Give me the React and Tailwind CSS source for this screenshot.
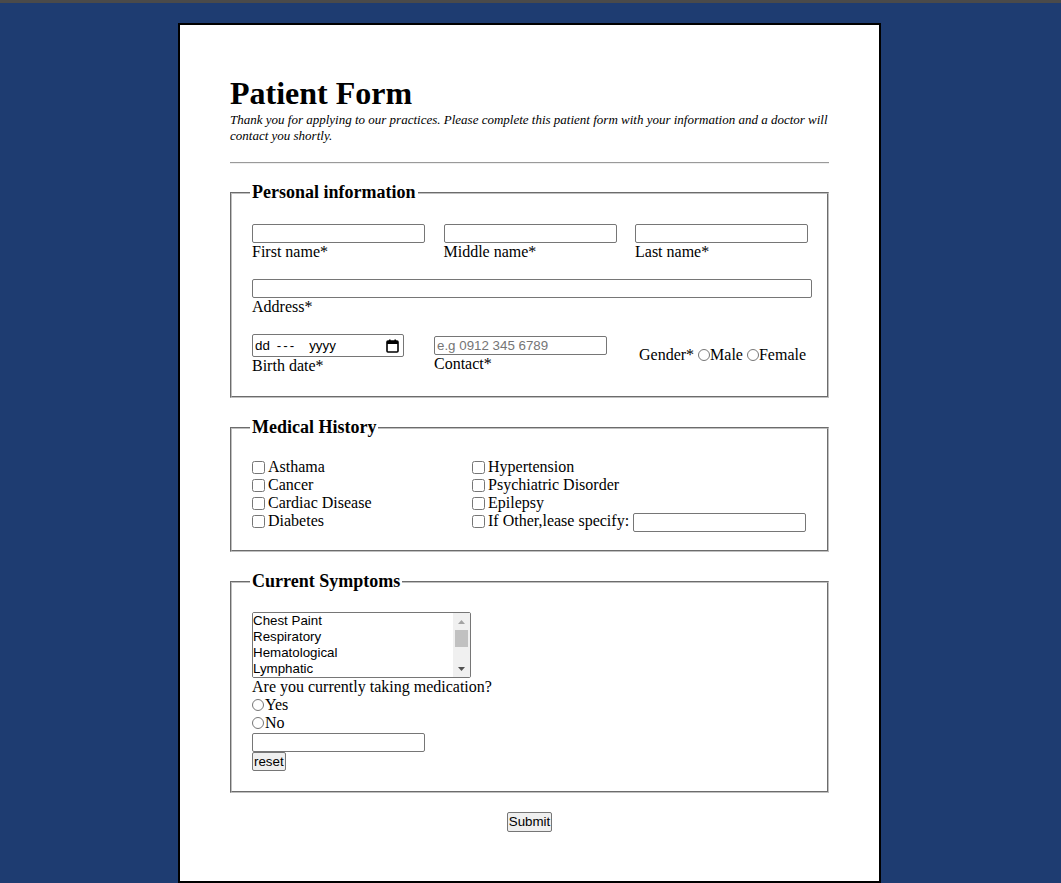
import React from "react";

const inputCls =
  "h-[19px] w-[173px] border border-[#767676] rounded-[2px] px-[2px] bg-white text-[13.33px] font-['Liberation_Sans',Arial,sans-serif] outline-none";

function Field({ label, className = "" }) {
  return (
    <div className={"flex flex-col " + className}>
      <input type="text" className={inputCls} />
      <label className="leading-[18px]">{label}</label>
    </div>
  );
}

function CalendarIcon() {
  return (
    <svg width="13" height="14" viewBox="0 0 13 14" fill="none">
      <rect x="1" y="2" width="11" height="11" rx="1" stroke="#000" strokeWidth="1.6" />
      <rect x="1" y="2" width="11" height="3" fill="#000" />
      <rect x="3" y="0.5" width="1.6" height="2.5" fill="#000" />
      <rect x="8.4" y="0.5" width="1.6" height="2.5" fill="#000" />
    </svg>
  );
}

function Check({ label }) {
  return (
    <label className="flex items-center leading-[18px]">
      <input type="checkbox" className="mr-[3px] w-[13px] h-[13px]" />
      {label}
    </label>
  );
}

function Legend({ children }) {
  return (
    <legend className="-ml-[2px] px-[2px] text-[18px] font-bold leading-[21px]">
      {children}
    </legend>
  );
}

const fieldsetCls =
  "border-2 [border-style:groove] border-[#c0c0c0] pl-[20px] pr-[15px]";

export default function App() {
  return (
    <div className="min-h-screen bg-[#1e3c71] border-t-[3px] border-[#4a4a4a] pt-[20px] font-['Liberation_Serif','Times_New_Roman',serif] text-black">
      <div className="ml-[178px] w-[703px] h-[860px] bg-white border-2 border-black px-[50px] pt-[50px]">
        <h1 className="text-[32px] font-bold leading-[37px]">Patient Form</h1>
        <p className="italic text-[13px] leading-[16px]">
          Thank you for applying to our practices. Please complete this patient form with your
          information and a doctor will contact you shortly.
        </p>
        <hr className="mt-[18px] border-t border-b border-t-[#9a9a9a] border-b-[#eeeeee]" />

        <form className="mt-[18px] flex flex-col gap-[19px] text-[16px]">
          {/* Personal information */}
          <fieldset className={fieldsetCls + " pb-[21px]"}>
            <Legend>Personal information</Legend>
            <div className="mt-[21px] flex gap-[18.5px]">
              <Field label="First name*" />
              <Field label="Middle name*" />
              <Field label="Last name*" />
            </div>
            <div className="mt-[18px] flex flex-col">
              <input type="text" className={inputCls + " !w-[560px]"} />
              <label className="leading-[18px]">Address*</label>
            </div>
            <div className="mt-[18px] flex items-center">
              <div className="flex flex-col">
                <div className="h-[23px] w-[152px] border border-[#767676] rounded-[2px] flex items-center pl-[2px] pr-[4px] font-['Liberation_Sans',Arial,sans-serif] text-[13.33px]">
                  <span>dd</span>
                  <span className="ml-[7px] tracking-[2px]">---</span>
                  <span className="ml-[13px]">yyyy</span>
                  <span className="ml-auto flex">
                    <CalendarIcon />
                  </span>
                </div>
                <label className="leading-[18px]">Birth date*</label>
              </div>
              <div className="ml-[30px] flex flex-col">
                <input
                  type="tel"
                  placeholder="e.g 0912 345 6789"
                  className={inputCls + " placeholder:text-[#757575]"}
                />
                <label className="leading-[18px]">Contact*</label>
              </div>
              <div className="ml-[32px] flex items-center leading-[18px]">
                Gender*&nbsp;
                <input type="radio" name="gender" className="w-[12px] h-[12px]" />
                Male
                <input type="radio" name="gender" className="ml-[4px] w-[12px] h-[12px]" />
                Female
              </div>
            </div>
          </fieldset>

          {/* Medical History */}
          <fieldset className={fieldsetCls + " pb-[20px]"}>
            <Legend>Medical History</Legend>
            <div className="mt-[20px] grid grid-cols-[220px_1fr]">
              <Check label="Asthama" />
              <Check label="Hypertension" />
              <Check label="Cancer" />
              <Check label="Psychiatric Disorder" />
              <Check label="Cardiac Disease" />
              <Check label="Epilepsy" />
              <Check label="Diabetes" />
              <label className="flex items-center leading-[18px] h-[18px]">
                <input type="checkbox" className="mr-[3px] w-[13px] h-[13px]" />
                If Other,lease specify:&nbsp;
                <input type="text" className={inputCls + " mt-[2px]"} />
              </label>
            </div>
          </fieldset>

          {/* Current Symptoms */}
          <fieldset className={fieldsetCls + " pb-[20px]"}>
            <Legend>Current Symptoms</Legend>
            <div className="mt-[20px] flex flex-col items-start">
              <div className="relative">
                <select
                  multiple
                  size={4}
                  className="block h-[66px] w-[219px] border border-[#767676] rounded-[2px] bg-white text-[13.33px] leading-[16px] font-['Liberation_Sans',Arial,sans-serif] outline-none [scrollbar-width:none]"
                >
                  <option>Chest Paint</option>
                  <option>Respiratory</option>
                  <option>Hematological</option>
                  <option>Lymphatic</option>
                  <option>Neurological</option>
                  <option>Psychiatric</option>
                  <option>Gastrointestinal</option>
                  <option>Other</option>
                </select>
                {/* drawn scrollbar */}
                <div className="absolute right-[1px] top-[1px] bottom-[1px] w-[17px] bg-[#f0f0f0] pointer-events-none flex flex-col items-center">
                  <svg className="mt-[7px]" width="7" height="4" viewBox="0 0 7 4">
                    <path d="M0 4 L3.5 0 L7 4 Z" fill="#a3a3a3" />
                  </svg>
                  <div className="mt-[6px] w-[13px] h-[17px] bg-[#c1c1c1]" />
                  <svg className="mt-auto mb-[6px]" width="7" height="4" viewBox="0 0 7 4">
                    <path d="M0 0 L7 0 L3.5 4 Z" fill="#505050" />
                  </svg>
                </div>
              </div>
              <p className="leading-[18px]">Are you currently taking medication?</p>
              <label className="flex items-center leading-[18px]">
                <input type="radio" name="med" className="w-[12px] h-[12px] mr-[1px]" />
                Yes
              </label>
              <label className="flex items-center leading-[18px]">
                <input type="radio" name="med" className="w-[12px] h-[12px] mr-[1px]" />
                No
              </label>
              <input type="text" className={inputCls + " mt-[1px]"} />
              <button
                type="reset"
                className="h-[19px] px-[1px] bg-[#efefef] border border-[#767676] rounded-[2px] text-[13.33px] leading-[15px] font-['Liberation_Sans',Arial,sans-serif]"
              >
                reset
              </button>
            </div>
          </fieldset>

          <div className="flex justify-center">
            <button
              type="submit"
              className="h-[20px] px-[1px] bg-[#efefef] border border-[#767676] rounded-[2px] text-[13.33px] leading-[16px] font-['Liberation_Sans',Arial,sans-serif]"
            >
              Submit
            </button>
          </div>
        </form>
      </div>
    </div>
  );
}
